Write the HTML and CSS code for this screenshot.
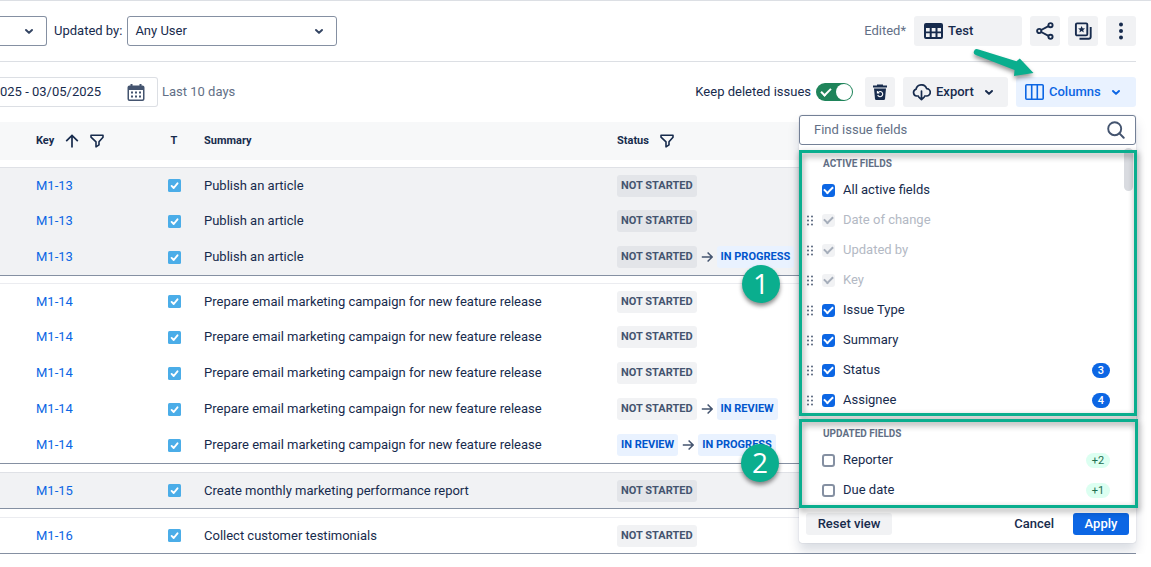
FILE: index.html
```html
<!DOCTYPE html>
<html lang="en">
<head>
<meta charset="utf-8">
<meta name="viewport" content="width=device-width, initial-scale=1">
<title>Issue history</title>
<link rel="stylesheet" href="styles.css">
</head>
<body>
<svg class="sprite" aria-hidden="true">
  <symbol id="chevron" viewBox="0 0 12 12"><path d="M3 5 6 7.900 9 5" fill="none" stroke="currentColor" stroke-width="2" stroke-linecap="round" stroke-linejoin="round"/></symbol>
  <symbol id="filter" viewBox="0 0 14 14"><path d="M1 1.2H13V3.2L9 7.8V10.8L6 12.8V7.8L1 3.2Z" fill="none" stroke="currentColor" stroke-width="1.6" stroke-linejoin="round"/></symbol>
  <symbol id="arrow-right" viewBox="0 0 12 12"><path d="M.8 6H11M6.6 1.4 11.1 6 6.6 10.6" fill="none" stroke="currentColor" stroke-width="1.5"/></symbol>
  <symbol id="task" viewBox="0 0 13 13"><rect width="13" height="13" rx="1.5" fill="#4bade8"/><path d="M3.6 6.9 5.7 9 9.5 4.3" fill="none" stroke="#fff" stroke-width="1.9" stroke-linecap="round" stroke-linejoin="round"/></symbol>
  <symbol id="grip" viewBox="0 0 6 11"><g fill="#44546f"><circle cx="1" cy="1.500" r=".9"/><circle cx="5" cy="1.500" r=".9"/><circle cx="1" cy="5.500" r=".9"/><circle cx="5" cy="5.500" r=".9"/><circle cx="1" cy="9.500" r=".9"/><circle cx="5" cy="9.500" r=".9"/></g></symbol>
</svg>
<div class="page">
  <header class="topbar">
    <div class="select select-cut">
      <select aria-label="Project"><option></option></select>
      <svg class="chevron"><use href="#chevron"/></svg>
    </div>
    <label for="user">Updated by:</label>
    <div class="select select-user">
      <select id="user"><option>Any User</option></select>
      <svg class="chevron"><use href="#chevron"/></svg>
    </div>
    <div class="actions">
      <span class="muted edited">Edited*</span>
      <button class="btn btn-test" type="button">
        <svg width="19" height="16" viewBox="0 0 19 16"><path d="M2 0h15A2 2 0 0 1 19 2v12a2 2 0 0 1-2 2H2a2 2 0 0 1-2-2V2A2 2 0 0 1 2 0zM2 5v3.500h3.700V5zm5.700 0v3.500h3.800V5zm5.800 0v3.500H17V5zM2 10.300V14h3.700v-3.700zm5.700 0V14h3.800v-3.700zm5.800 0V14H17v-3.700z" fill="currentColor" fill-rule="evenodd"/></svg>
        Test
      </button>
      <button class="btn btn-icon" type="button" aria-label="Share">
        <svg width="18" height="18" viewBox="0 0 18 18"><g fill="none" stroke="currentColor" stroke-width="1.900"><circle cx="3.200" cy="9" r="2.100"/><circle cx="14.500" cy="3.200" r="2.100"/><circle cx="14.500" cy="14.800" r="2.100"/><path d="M5.200 8 12.500 4.200M5.200 10l7.300 3.800"/></g></svg>
      </button>
      <button class="btn btn-icon" type="button" aria-label="Saved views">
        <svg width="18" height="18" viewBox="0 0 18 18"><rect x="1.900" y="1.400" width="11.400" height="12" rx="1.200" fill="none" stroke="currentColor" stroke-width="1.900"/><path d="m7.600 3.900 1 2.300 2.500.2-1.900 1.600.6 2.500-2.200-1.400-2.200 1.400.6-2.500-1.900-1.600 2.500-.2z" fill="currentColor"/><path d="M16.700 5v9.700a2 2 0 0 1-2 2H5.500" fill="none" stroke="currentColor" stroke-width="1.900"/></svg>
      </button>
      <button class="btn btn-icon" type="button" aria-label="More">
        <svg width="4" height="18" viewBox="0 0 4 18"><g fill="currentColor"><circle cx="2" cy="2.500" r="2"/><circle cx="2" cy="9" r="2"/><circle cx="2" cy="15.500" r="2"/></g></svg>
      </button>
    </div>
  </header>

  <div class="toolbar">
    <div class="date-range">
      <input type="text" aria-label="Date range" value="025 - 03/05/2025">
      <svg width="18" height="18" viewBox="0 0 18 18"><path d="M3.500 1h2v1.500h7V1h2v1.500h1a2 2 0 0 1 2 2V16a2 2 0 0 1-2 2h-13a2 2 0 0 1-2-2V4.500a2 2 0 0 1 2-2h1zM2 7v8.500c0 .6.300 1 1 1h12c.700 0 1-.4 1-1V7z" fill="#44546f" fill-rule="evenodd"/><path d="M4 8.500h2v2H4zM8 8.500h2v2H8zM12 8.500h2v2h-2zM4 12.500h2v2H4zM8 12.500h2v2H8zM12 12.500h2v2h-2z" fill="#44546f"/></svg>
    </div>
    <span class="muted">Last 10 days</span>
    <div class="tools">
      <label class="keep">Keep deleted issues <input class="toggle" type="checkbox" role="switch" checked></label>
      <button class="btn btn-icon" type="button" aria-label="Deleted issues">
        <svg width="16" height="16" viewBox="0 0 16 16"><path d="M5 .5h6v1h4v2H1v-2h4zM2 4.500h12l-1 10.500a1.300 1.300 0 0 1-1.300 1H4.300A1.300 1.300 0 0 1 3 15z" fill="currentColor"/><path d="M6 8.600A2.600 2.600 0 1 1 5.700 11M5.400 7v2h2" fill="none" stroke="#fff" stroke-width="1.100"/></svg>
      </button>
      <button class="btn btn-export" type="button">
        <svg width="19" height="17" viewBox="0 0 19 17"><path d="M6.300 12H4.600A3.500 3.500 0 0 1 4 5.200 5.500 5.500 0 0 1 14.600 4.600 3.700 3.700 0 0 1 14.500 12h-1.800M9.500 7v8.600M6.900 13.200l2.600 2.500 2.600-2.500" fill="none" stroke="currentColor" stroke-width="1.700" stroke-linejoin="round" stroke-linecap="round"/></svg>
        Export
        <svg class="chevron"><use href="#chevron"/></svg>
      </button>
      <div class="columns">
        <button class="btn btn-columns" type="button" aria-expanded="true">
          <svg width="19" height="16" viewBox="0 0 19 16"><rect x=".8" y=".8" width="17.400" height="14.400" rx="1" fill="none" stroke="currentColor" stroke-width="1.600"/><path d="M6.700 1v14M12.300 1v14" stroke="currentColor" stroke-width="1.600"/></svg>
          Columns
          <svg class="chevron"><use href="#chevron"/></svg>
        </button>
        <form class="popup">
          <div class="search">
            <input type="text" placeholder="Find issue fields" aria-label="Find issue fields">
            <svg width="18" height="18" viewBox="0 0 18 18"><circle cx="7.700" cy="7.700" r="6.500" fill="none" stroke="#44546f" stroke-width="1.900"/><path d="m12.400 12.400 4.300 4.300" stroke="#44546f" stroke-width="2" stroke-linecap="round"/></svg>
          </div>
          <section class="fields fields-active">
            <h2>Active fields</h2>
            <label class="field"><span class="grip"></span><input class="check" type="checkbox" checked>All active fields</label>
            <label class="field is-disabled"><svg class="grip"><use href="#grip"/></svg><input class="check" type="checkbox" checked disabled>Date of change</label>
            <label class="field is-disabled"><svg class="grip"><use href="#grip"/></svg><input class="check" type="checkbox" checked disabled>Updated by</label>
            <label class="field is-disabled"><svg class="grip"><use href="#grip"/></svg><input class="check" type="checkbox" checked disabled>Key</label>
            <label class="field"><svg class="grip"><use href="#grip"/></svg><input class="check" type="checkbox" checked>Issue Type</label>
            <label class="field"><svg class="grip"><use href="#grip"/></svg><input class="check" type="checkbox" checked>Summary</label>
            <label class="field"><svg class="grip"><use href="#grip"/></svg><input class="check" type="checkbox" checked>Status<span class="count">3</span></label>
            <label class="field"><svg class="grip"><use href="#grip"/></svg><input class="check" type="checkbox" checked>Assignee<span class="count">4</span></label>
          </section>
          <section class="fields fields-updated">
            <h2>Updated fields</h2>
            <label class="field"><span class="grip"></span><input class="check" type="checkbox">Reporter<span class="added">+2</span></label>
            <label class="field"><span class="grip"></span><input class="check" type="checkbox">Due date<span class="added">+1</span></label>
          </section>
          <footer class="popup-footer">
            <button class="small small-reset" type="button">Reset view</button>
            <button class="small small-cancel" type="button">Cancel</button>
            <button class="small small-apply" type="submit">Apply</button>
          </footer>
        </form>
      </div>
    </div>
  </div>

  <table class="issues">
    <colgroup><col class="col-key"><col class="col-type"><col class="col-summary"><col></colgroup>
    <thead>
      <tr>
        <th scope="col"><span class="head">Key
          <svg width="14" height="14" viewBox="0 0 14 14"><path d="M7 13.500V1.500M1.200 7.200 7 1.400l5.800 5.800" fill="none" stroke="currentColor" stroke-width="1.700"/></svg>
          <svg width="14" height="14"><use href="#filter"/></svg></span></th>
        <th scope="col" class="type">T</th>
        <th scope="col">Summary</th>
        <th scope="col"><span class="head">Status <svg width="14" height="14"><use href="#filter"/></svg></span></th>
      </tr>
    </thead>
    <tbody class="shaded">
      <tr><td><a href="#M1-13">M1-13</a></td><td class="type"><svg><use href="#task"/></svg></td><td>Publish an article</td><td><div class="flow"><span class="tag">Not started</span></div></td></tr>
      <tr><td><a href="#M1-13">M1-13</a></td><td class="type"><svg><use href="#task"/></svg></td><td>Publish an article</td><td><div class="flow"><span class="tag">Not started</span></div></td></tr>
      <tr><td><a href="#M1-13">M1-13</a></td><td class="type"><svg><use href="#task"/></svg></td><td>Publish an article</td><td><div class="flow"><span class="tag">Not started</span><svg><use href="#arrow-right"/></svg><span class="tag tag-blue">In progress</span></div></td></tr>
    </tbody>
    <tbody class="tight">
      <tr><td><a href="#M1-14">M1-14</a></td><td class="type"><svg><use href="#task"/></svg></td><td>Prepare email marketing campaign for new feature release</td><td><div class="flow"><span class="tag">Not started</span></div></td></tr>
      <tr><td><a href="#M1-14">M1-14</a></td><td class="type"><svg><use href="#task"/></svg></td><td>Prepare email marketing campaign for new feature release</td><td><div class="flow"><span class="tag">Not started</span></div></td></tr>
      <tr><td><a href="#M1-14">M1-14</a></td><td class="type"><svg><use href="#task"/></svg></td><td>Prepare email marketing campaign for new feature release</td><td><div class="flow"><span class="tag">Not started</span></div></td></tr>
      <tr><td><a href="#M1-14">M1-14</a></td><td class="type"><svg><use href="#task"/></svg></td><td>Prepare email marketing campaign for new feature release</td><td><div class="flow"><span class="tag">Not started</span><svg><use href="#arrow-right"/></svg><span class="tag tag-blue">In review</span></div></td></tr>
      <tr><td><a href="#M1-14">M1-14</a></td><td class="type"><svg><use href="#task"/></svg></td><td>Prepare email marketing campaign for new feature release</td><td><div class="flow"><span class="tag tag-blue">In review</span><svg><use href="#arrow-right"/></svg><span class="tag tag-blue">In progress</span></div></td></tr>
    </tbody>
    <tbody class="shaded">
      <tr><td><a href="#M1-15">M1-15</a></td><td class="type"><svg><use href="#task"/></svg></td><td>Create monthly marketing performance report</td><td><div class="flow"><span class="tag">Not started</span></div></td></tr>
    </tbody>
    <tbody>
      <tr><td><a href="#M1-16">M1-16</a></td><td class="type"><svg><use href="#task"/></svg></td><td>Collect customer testimonials</td><td><div class="flow"><span class="tag">Not started</span></div></td></tr>
    </tbody>
  </table>

  <svg class="pointer" width="72" height="40" viewBox="0 0 72 40" aria-hidden="true"><path d="M9.800 4.300 48.500 16.300 51.800 13.500 65.500 28 46 31 46.500 25 7.800 10A3 3 0 0 1 9.800 4.300Z" fill="#0aae8e"/></svg>
  <span class="marker marker-one">1</span>
  <span class="marker marker-two">2</span>
</div>
</body>
</html>
```
FILE: styles.css
```css
* { box-sizing: border-box; }

body {
  margin: 0;
  background: #fff;
  color: #172b4d;
  font: 13px/20px Roboto, "Liberation Sans", sans-serif;
}

button, input, select { font: inherit; color: inherit; }
svg { flex: none; display: block; }
a { color: #0c66e4; text-decoration: none; }

.sprite { position: absolute; width: 0; height: 0; }
.page { position: relative; padding-right: 15px; overflow: hidden; border-top: 1px solid #dcdfe4; }
.muted { color: #626f86; }
.chevron { width: 12px; height: 12px; }

.topbar { display: flex; align-items: center; height: 61px; border-bottom: 1px solid #dcdfe4; }
.topbar label { margin: 0 5px 0 7px; }

.select { display: grid; align-items: center; height: 30px; }
.select select {
  grid-area: 1 / 1;
  width: 100%;
  height: 30px;
  padding: 0 7px;
  border: 1px solid #8590a2;
  border-radius: 3px;
  background: #fff;
  appearance: none;
}
.select .chevron { grid-area: 1 / 1; justify-self: end; margin-right: 12px; pointer-events: none; color: #344563; }
.select-cut { width: 47px; }
.select-cut select { border-left: 0; border-radius: 0 3px 3px 0; }
.select-user { width: 210px; }

.actions, .tools { display: flex; align-items: center; gap: 8px; margin-left: auto; }

.btn {
  display: flex;
  align-items: center;
  height: 30px;
  padding: 0;
  border: 0;
  border-radius: 3px;
  background: #f1f2f4;
  font-weight: 500;
}
.btn-test { width: 108px; padding-left: 10px; gap: 5px; }
.btn-icon { width: 30px; justify-content: center; }
.btn-export { width: 105px; padding-left: 9px; gap: 5px; }
.btn-export .chevron, .btn-columns .chevron { margin-left: 4px; }
.btn-columns { width: 120px; padding-left: 9px; gap: 5px; background: #e9f2ff; color: #0c66e4; }

.toolbar { display: flex; align-items: center; height: 60px; gap: 4px; }
.date-range {
  display: flex;
  align-items: center;
  justify-content: space-between;
  width: 158px;
  height: 30px;
  padding-right: 12px;
  border: 1px solid #dcdfe4;
  border-left: 0;
  border-radius: 0 3px 3px 0;
}
.date-range input { width: 110px; padding: 0; border: 0; outline: 0; }

.keep { display: flex; align-items: center; gap: 5px; margin-right: 4px; }
.toggle {
  position: relative;
  width: 37px;
  height: 18px;
  margin: 0;
  border-radius: 9px;
  background: #1f845a;
  appearance: none;
}
.toggle::before {
  content: "";
  position: absolute;
  left: 5px;
  top: 5px;
  width: 8px;
  height: 4px;
  border: solid #fff;
  border-width: 0 0 2px 2px;
  transform: rotate(-45deg);
}
.toggle::after {
  content: "";
  position: absolute;
  right: 1px;
  top: 1px;
  width: 16px;
  height: 16px;
  border-radius: 50%;
  background: #fff;
}

.columns { position: relative; z-index: 2; }
.popup {
  position: absolute;
  top: 38px;
  right: 0;
  width: 337px;
  border-radius: 3px;
  background: #fff;
  box-shadow: 0 8px 12px rgba(9, 30, 66, .15), 0 0 1px rgba(9, 30, 66, .31);
}
.search {
  display: flex;
  align-items: center;
  height: 30px;
  padding: 0 10px 0 14px;
  border: 1px solid #738096;
  border-radius: 3px;
}
.search input { flex: 1; min-width: 0; padding: 0; border: 0; outline: 0; background: none; }
.search input::placeholder { color: #626f86; opacity: 1; }

.fields { position: relative; }
.fields h2 {
  height: 30px;
  margin: 0;
  padding: 9px 24px 0;
  color: #626f86;
  font-size: 10px;
  font-weight: 700;
  text-transform: uppercase;
}
.fields::after {
  content: "";
  position: absolute;
  inset: 5px -1px -1px 0;
  border: 3px solid #0aae8e;
  filter: drop-shadow(1px 3px 3px rgba(0, 0, 0, .45));
  pointer-events: none;
}
.fields-updated::after { inset: 4px -2px -3px 0; }
.fields-active::before {
  content: "";
  position: absolute;
  top: 3px;
  right: 3px;
  width: 9px;
  height: 43px;
  border-radius: 5px;
  background: #d9dbe0;
}

.field { display: flex; align-items: center; height: 30px; padding: 0 26px 0 8px; }
.field.is-disabled { color: #b3b9c4; }
.grip { width: 6px; height: 11px; margin-right: 9px; }
.check {
  display: grid;
  place-items: center;
  width: 13px;
  height: 13px;
  margin: 0 8px 0 0;
  border: 2px solid #8590a2;
  border-radius: 3px;
  background: #fff;
  appearance: none;
}
.check:checked { border-color: #0c66e4; background: #0c66e4; }
.check:checked::before {
  content: "";
  width: 7px;
  height: 4px;
  margin-bottom: 2px;
  border: solid #fff;
  border-width: 0 0 2px 2px;
  transform: rotate(-45deg);
}
.check:disabled { border-color: #f1f2f4; background: #f1f2f4; }
.check:disabled::before { border-color: #a5adba; }

.count, .added { margin-left: auto; border-radius: 8px; font-size: 11px; line-height: 15px; text-align: center; }
.count { width: 18px; background: #0c66e4; color: #fff; font-weight: 500; }
.added { width: 24px; background: #dcfff1; color: #216e4e; }

.popup-footer { display: flex; padding: 8px 7px; }
.small { height: 22px; padding: 0 11px; border: 0; border-radius: 3px; background: none; font-weight: 500; line-height: 22px; }
.small-reset { width: 86px; margin-right: auto; background: #f1f2f4; }
.small-cancel { margin-right: 8px; }
.small-apply { width: 56px; background: #0c66e4; color: #fff; }

.issues { width: 100%; border-spacing: 0; table-layout: fixed; }
.col-key { width: 155px; }
.col-type { width: 38px; }
.col-summary { width: 413px; }
.issues th { height: 38px; padding: 0 0 0 11px; background: #f7f8f9; font-size: 11px; font-weight: 700; text-align: left; }
.issues td { height: 36px; padding: 0 0 0 11px; white-space: nowrap; }
.issues th:first-child, .issues td:first-child { padding-left: 36px; }
.issues .type { padding: 0; }
.issues th.type { text-align: center; }
.head { display: flex; align-items: center; gap: 11px; }
.type svg { width: 13px; height: 13px; margin: 0 auto; }
.issues tbody::before { content: ""; display: table-row; height: 8px; }
.issues thead + tbody::before, .issues .tight::before { height: 7px; }
.issues tbody tr:first-child td { border-top: 1px solid #ebecf0; }
.issues tbody tr:last-child td { height: 37px; border-bottom: 1px solid #8590a2; }
.issues .shaded td { background: #f1f2f4; }
.issues .shaded tr:first-child td { border-top-color: #dfe1e6; }

.flow { display: flex; align-items: center; gap: 4px; color: #44546f; }
.flow svg { width: 12px; height: 12px; }
.tag {
  padding: 0 4px;
  border-radius: 3px;
  background: rgba(9, 30, 66, .06);
  font-size: 11px;
  font-weight: 700;
  line-height: 22px;
  text-transform: uppercase;
}
.tag-blue { background: #e9f2ff; color: #0055cc; }

.pointer { position: absolute; z-index: 3; top: 44px; right: 111px; filter: drop-shadow(0 3px 2px rgba(0, 0, 0, .4)); }
.marker {
  position: absolute;
  z-index: 3;
  width: 38px;
  height: 38px;
  border-radius: 50%;
  background: #0aae8e;
  box-shadow: 0 3px 4px rgba(0, 0, 0, .45);
  color: #fff;
  font: 28px/36px "Open Sans", "Noto Sans", sans-serif;
  text-align: center;
}
.marker-one { top: 264px; right: 371px; }
.marker-two { top: 443px; right: 372px; }
```
